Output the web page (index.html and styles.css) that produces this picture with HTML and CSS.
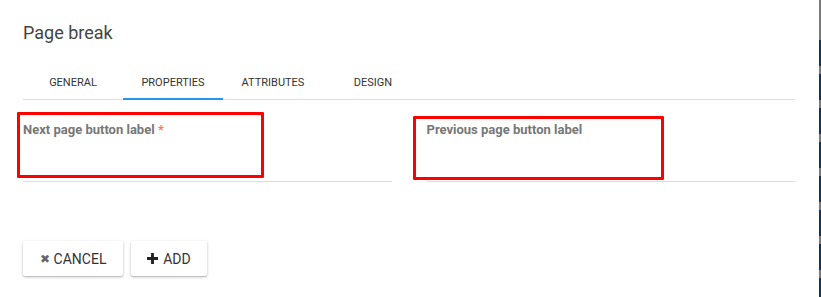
FILE: index.html
```html
<!DOCTYPE html>
<html>
	<head>
		<meta charset="UTF-8">
		<meta name="viewport" content="width=device-width, initial-scale=1.0">
		<title>Page break</title>
		<link rel="stylesheet" href="styles.css">
	</head>
	<body>
		<div class="page">
			<div class="dialog">
				<h2 class="title">Page break</h2>

				<div class="tabs">
					<span class="tab">General</span>
					<span class="tab active">Properties</span>
					<span class="tab">Attributes</span>
					<span class="tab">Design</span>
				</div>

				<div class="fields">
					<div class="field">
						<label class="fieldLabel">Next page button label <span class="req">*</span></label>
						<span class="mark markNext"></span>
					</div>
					<div class="field">
						<label class="fieldLabel">Previous page button label</label>
						<span class="mark markPrev"></span>
					</div>
				</div>

				<div class="actions">
					<button class="btn btnCancel"><span class="ico">&#10006;</span>Cancel</button>
					<button class="btn btnAdd">
						<svg class="plus" viewBox="0 0 10 10" width="11" height="11"><path d="M3.7 0h2.6v3.7H10v2.6H6.3V10H3.7V6.3H0V3.7h3.7z"/></svg>Add
					</button>
				</div>
			</div>
			<div class="scroller"></div>
		</div>
	</body>
</html>
```

FILE: styles.css
```css
* {
	box-sizing: border-box;
}

body {
	margin: 0;
	padding: 0;
	background-color: #fff;
	font-family: Roboto, "Noto Sans", sans-serif;
	color: #333;
}

.page {
	display: flex;
	flex-flow: row nowrap;
	height: 297px;
}

.dialog {
	flex: 1 1 auto;
	padding: 21px 24px 0 23px;
}

.title {
	margin: 0;
	font-size: 18px;
	line-height: 24px;
	font-weight: 400;
	color: #444;
}

.tabs {
	display: flex;
	margin-top: 31px;
	border-bottom: 1px solid #e0e0e0;
}

.tab {
	position: relative;
	flex: 0 0 100px;
	height: 23px;
	text-align: center;
	font-size: 11px;
	line-height: 14px;
	text-transform: uppercase;
	color: #333;
}

.tab.active::after {
	content: "";
	position: absolute;
	left: 0;
	right: 0;
	bottom: -1px;
	height: 2px;
	background-color: #2196f3;
}

.fields {
	display: flex;
	gap: 35px;
	margin-top: 22px;
}

.field {
	position: relative;
	flex: 1 1 0;
	height: 60px;
	border-bottom: 1px solid #ddd;
}

.fieldLabel {
	display: block;
	font-size: 13px;
	line-height: 15px;
	font-weight: 700;
	color: #777;
}

.req {
	color: #f47c6a;
}

.mark {
	position: absolute;
	border: 3px solid #f00;
	border-radius: 1px;
}

.markNext {
	left: -6px;
	top: -10px;
	width: 247px;
	height: 66px;
}

.markPrev {
	left: -14px;
	top: -6px;
	width: 251px;
	height: 64px;
}

.actions {
	display: flex;
	gap: 8px;
	margin-top: 59px;
}

.btn {
	display: flex;
	align-items: center;
	justify-content: center;
	height: 35px;
	padding: 0;
	border: none;
	border-radius: 2px;
	background-color: #fff;
	box-shadow: 0 1px 3px 0 rgba(0, 0, 0, 0.25), 0 1px 1px 0 rgba(0, 0, 0, 0.1);
	font-family: Roboto, sans-serif;
	font-size: 14px;
	text-transform: uppercase;
	color: #333;
}

.btnCancel {
	width: 100px;
}

.btnAdd {
	width: 76px;
}

.ico {
	font-size: 12px;
	color: #666;
	margin-right: 4px;
}

.plus {
	fill: #222;
	margin-right: 5px;
}

.scroller {
	flex: 0 0 2px;
	background:
		linear-gradient(#7a7a7a, #7a7a7a) top / 100% 40px no-repeat,
		repeating-linear-gradient(to bottom, #7a7a7a 0, #7a7a7a 6px, #0f355e 6px, #0f355e 32px, #7a7a7a 32px, #7a7a7a 34px);
	background-color: #0f355e;
}
```
